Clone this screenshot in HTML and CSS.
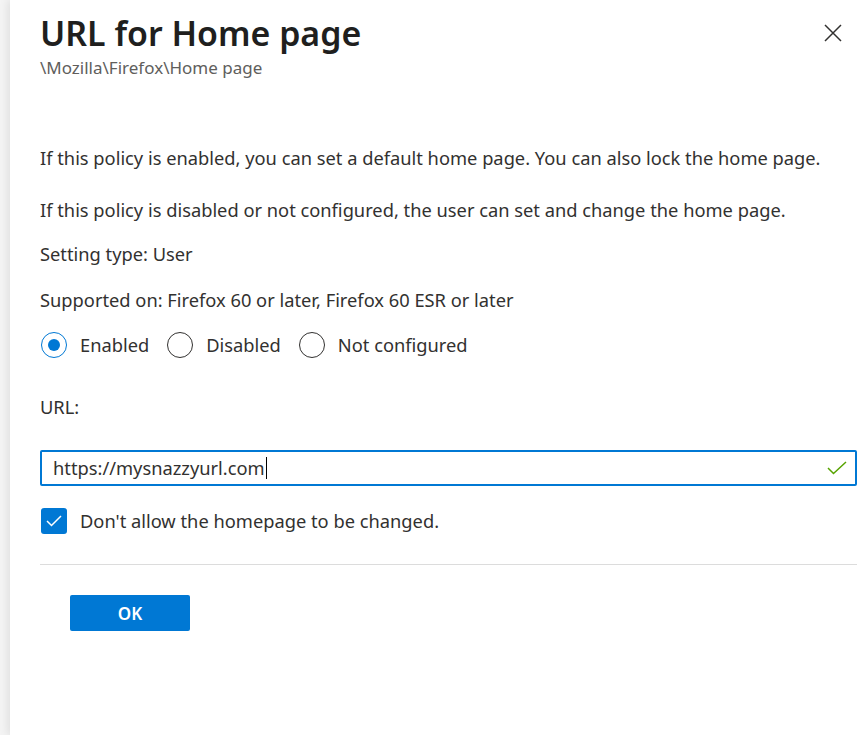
FILE: index.html
```html
<!DOCTYPE html>
<html lang="en">
<head>
<meta charset="utf-8">
<title>URL for Home page</title>
<link rel="stylesheet" href="styles.css">
</head>
<body>
<aside class="panel">
  <header class="panel-head">
    <div class="titles">
      <h1 class="title">URL for Home page</h1>
      <div class="path">\Mozilla\Firefox\Home page</div>
    </div>
    <button class="close" aria-label="Close">
      <svg width="18" height="18" viewBox="0 0 18 18"><path d="M1 1 L17 17 M17 1 L1 17" stroke="#323130" stroke-width="1.5" fill="none"/></svg>
    </button>
  </header>

  <div class="body">
    <p class="text p1">If this policy is enabled, you can set a default home page. You can also lock the home page.</p>
    <p class="text p2">If this policy is disabled or not configured, the user can set and change the home page.</p>
    <p class="text p3">Setting type: User</p>
    <p class="text p4">Supported on: Firefox 60 or later, Firefox 60 ESR or later</p>

    <div class="radios">
      <label class="radio checked"><span class="dot"></span>Enabled</label>
      <label class="radio"><span class="dot"></span>Disabled</label>
      <label class="radio"><span class="dot"></span>Not configured</label>
    </div>

    <div class="text field-label">URL:</div>
    <div class="input">
      <span class="value">https://mysnazzyurl.com</span><span class="caret"></span>
      <svg class="valid" width="20" height="14" viewBox="0 0 20 14"><path d="M1 7 L6.5 12.5 L19 1" stroke="#57a300" stroke-width="1.5" fill="none"/></svg>
    </div>

    <label class="check">
      <span class="box"><svg width="16" height="12" viewBox="0 0 16 12"><path d="M1 6 L5.5 10.5 L15 1" stroke="#fff" stroke-width="1.5" fill="none"/></svg></span>
      Don't allow the homepage to be changed.
    </label>

    <hr class="divider">

    <div class="actions">
      <button class="ok">OK</button>
    </div>
  </div>
</aside>
</body>
</html>
```

FILE: styles.css
```css
html, body {
  margin: 0;
  padding: 0;
  height: 100%;
  background: #f4f4f4;
  overflow: hidden;
}

body {
  font-family: "Noto Sans", "Open Sans", sans-serif;
  color: #323130;
  font-size: 18.3px;
}

.panel {
  margin-left: 10px;
  height: 100%;
  background: #fff;
  box-shadow: -3px 0 8px rgba(0, 0, 0, 0.08);
  padding: 13px 0 0 30px;
  box-sizing: border-box;
}

.panel-head {
  display: flex;
  justify-content: space-between;
  align-items: flex-start;
  padding-right: 22px;
}

.title {
  margin: 0;
  font-size: 33.9px;
  line-height: 40px;
  font-weight: 600;
  color: #201f1e;
}

.path {
  margin-top: 5px;
  line-height: 20px;
  font-size: 17px;
  color: #605e5c;
}

.close {
  border: 0;
  background: none;
  padding: 0;
  margin-top: 11px;
  width: 18px;
  height: 18px;
  cursor: pointer;
}

.body {
  padding-right: 7px;
}

.text {
  margin: 0;
  line-height: 22px;
}

.p1 { margin-top: 69px; }
.p2 { margin-top: 30px; }
.p3 { margin-top: 22px; }
.p4 { margin-top: 24px; }

.radios {
  display: flex;
  gap: 18px;
  margin-top: 21px;
  margin-left: 1px;
  height: 26px;
  align-items: center;
}

.radio {
  display: flex;
  align-items: center;
  gap: 13px;
  line-height: 22px;
}

.dot {
  width: 26px;
  height: 26px;
  border: 1px solid #323130;
  border-radius: 50%;
  box-sizing: border-box;
  position: relative;
}

.radio.checked .dot {
  border-color: #0078d4;
}

.radio.checked .dot::after {
  content: "";
  position: absolute;
  left: 6px;
  top: 6px;
  width: 12px;
  height: 12px;
  border-radius: 50%;
  background: #0078d4;
}

.field-label {
  margin-top: 38px;
}

.input {
  margin-top: 32px;
  height: 36px;
  border: 2px solid #0078d4;
  border-radius: 2px;
  box-sizing: border-box;
  display: flex;
  align-items: center;
  padding: 0 8px 0 11px;
}

.value {
  line-height: 22px;
}

.caret {
  width: 1px;
  height: 22px;
  background: #000;
  margin-left: 1px;
}

.valid {
  margin-left: auto;
}

.check {
  margin-top: 22px;
  margin-left: 1px;
  display: flex;
  align-items: center;
  gap: 13px;
  line-height: 22px;
}

.box {
  width: 26px;
  height: 26px;
  background: #0078d4;
  border-radius: 3px;
  display: flex;
  align-items: center;
  justify-content: center;
}

.divider {
  margin: 30px 0 0 0;
  border: 0;
  border-top: 1px solid #dcdcdc;
}

.actions {
  margin-top: 30px;
  padding-left: 30px;
}

.ok {
  width: 120px;
  height: 36px;
  border: 0;
  border-radius: 2px;
  background: #0078d4;
  color: #fff;
  font-family: inherit;
  font-size: 17px;
  font-weight: 600;
  cursor: pointer;
}
```
